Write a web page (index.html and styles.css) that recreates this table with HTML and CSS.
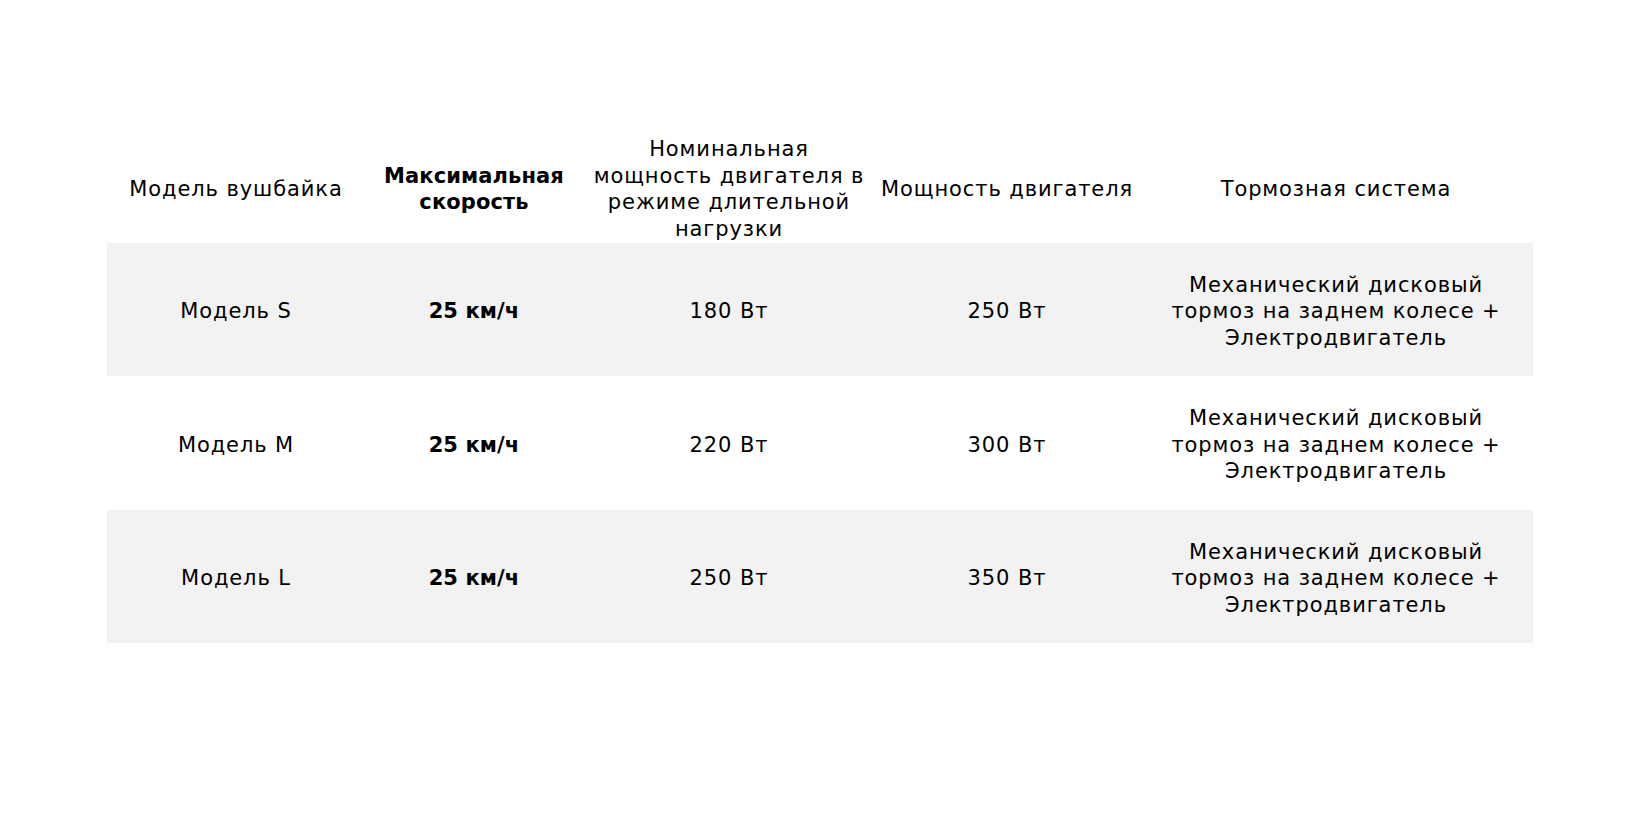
FILE: index.html
```html
<!DOCTYPE html>
<html lang="ru">
<head>
<meta charset="utf-8">
<title>Характеристики вушбайков</title>
<link rel="stylesheet" href="styles.css">
</head>
<body>
<main class="page">
  <table class="spec">
    <colgroup>
      <col class="c-model">
      <col class="c-speed">
      <col class="c-nominal">
      <col class="c-power">
      <col class="c-brake">
    </colgroup>
    <thead>
      <tr>
        <th>Модель вушбайка</th>
        <th class="strong">Максимальная<br>скорость</th>
        <th>Номинальная<br>мощность двигателя в<br>режиме длительной<br>нагрузки</th>
        <th>Мощность двигателя</th>
        <th>Тормозная система</th>
      </tr>
    </thead>
    <tbody>
      <tr>
        <td>Модель S</td>
        <td class="strong">25 км/ч</td>
        <td>180 Вт</td>
        <td>250 Вт</td>
        <td>Механический дисковый<br>тормоз на заднем колесе +<br>Электродвигатель</td>
      </tr>
      <tr>
        <td>Модель M</td>
        <td class="strong">25 км/ч</td>
        <td>220 Вт</td>
        <td>300 Вт</td>
        <td>Механический дисковый<br>тормоз на заднем колесе +<br>Электродвигатель</td>
      </tr>
      <tr>
        <td>Модель L</td>
        <td class="strong">25 км/ч</td>
        <td>250 Вт</td>
        <td>350 Вт</td>
        <td>Механический дисковый<br>тормоз на заднем колесе +<br>Электродвигатель</td>
      </tr>
    </tbody>
  </table>
</main>
</body>
</html>
```

FILE: styles.css
```css
html, body {
  margin: 0;
  padding: 0;
  background: #ffffff;
}

body {
  font-family: "DejaVu Sans", "Liberation Sans", sans-serif;
  color: #000000;
}

.page {
  padding: 131px 107px 0;
}

.spec {
  width: 100%;
  border-collapse: collapse;
  border-spacing: 0;
  table-layout: fixed;
  font-size: 21px;
  line-height: 26.5px;
  letter-spacing: 0.9px;
}

.c-model { width: 258px; }
.c-speed { width: 218px; }
.c-nominal { width: 292px; }
.c-power { width: 264px; }
.c-brake { width: 394px; }

.spec th,
.spec td {
  box-sizing: border-box;
  text-align: center;
  vertical-align: middle;
  font-weight: 400;
  padding: 4px 2px 0;
}

.spec th {
  height: 112px;
}

.spec td {
  height: 133.4px;
}

.spec tbody tr:nth-child(odd) {
  background: #f2f2f2;
}

.spec .strong {
  font-weight: 700;
  letter-spacing: 0.1px;
}
```
